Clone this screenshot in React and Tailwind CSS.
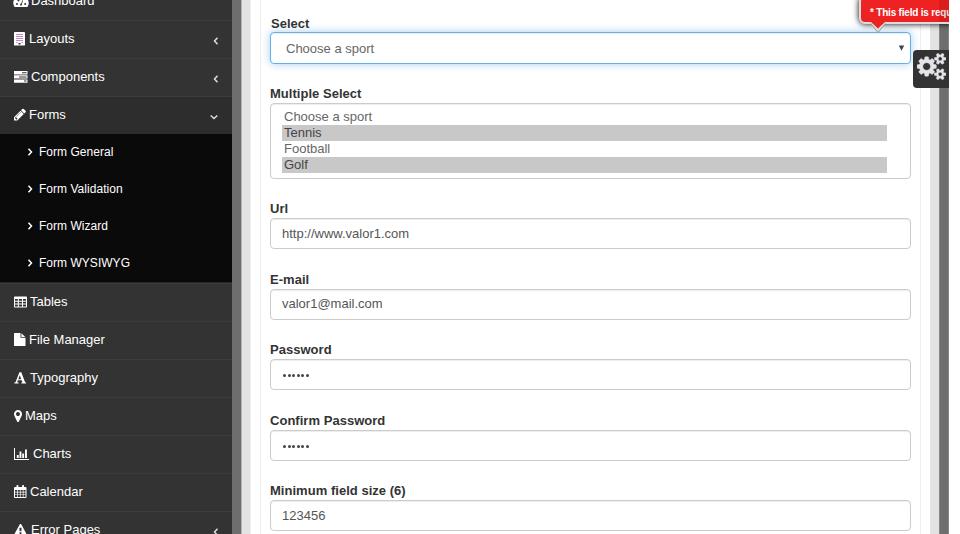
import React from "react";

const PENCIL =
  "M491 1536l91-91-235-235-91 91v107h128v128h107zm523-928q0-22-22-22-10 0-17 7l-542 542q-7 7-7 17 0 22 22 22 10 0 17-7l542-542q7-7 7-17zm-54-192l416 416-832 832h-416v-416zm683 96q0 53-37 90l-166 166-416-416 166-165q36-38 90-38 53 0 91 38l235 234q37 39 37 91z";
const MARKER =
  "M1152 640q0-106-75-181t-181-75-181 75-75 181 75 181 181 75 181-75 75-181zm256 0q0 109-33 179l-364 774q-16 33-47.5 52t-67.5 19-67.5-19-46.5-52l-365-774q-33-70-33-179 0-212 150-362t362-150 362 150 150 362z";
const WARNING =
  "M1024 1375v-190q0-14-9.5-23.5t-22.5-9.5h-192q-13 0-22.5 9.5t-9.5 23.5v190q0 14 9.5 23.5t22.5 9.5h192q13 0 22.5-9.5t9.5-23.5zm-2-374l18-459q0-12-10-19-13-11-24-11h-220q-11 0-24 11-10 7-10 21l17 457q0 10 10 16.5t24 6.5h185q14 0 23.5-6.5t10.5-16.5zm-14-934l768 1408q35 63-2 126-17 29-46.5 46t-63.5 17h-1536q-34 0-63.5-17t-46.5-46q-37-63-2-126l768-1408q17-31 47-49t65-18 65 18 47 49z";
const COGS =
  "M896 896q0-106-75-181t-181-75-181 75-75 181 75 181 181 75 181-75 75-181zm768 512q0-52-38-90t-90-38-90 38-38 90q0 53 37.5 90.5t90.5 37.5 90.5-37.5 37.5-90.5zm0-1024q0-52-38-90t-90-38-90 38-38 90q0 53 37.5 90.5t90.5 37.5 90.5-37.5 37.5-90.5zm-384 421v185q0 10-7 19.5t-16 10.5l-155 24q-11 35-32 76 34 48 90 115 7 11 7 20 0 12-7 19-23 30-82.5 89.5t-78.5 59.5q-11 0-21-7l-115-90q-37 19-77 31-11 108-23 155-7 24-30 24h-186q-11 0-20-7.5t-10-17.5l-23-153q-34-10-75-31l-118 89q-7 7-20 7-11 0-21-8-144-133-144-160 0-9 7-19 10-14 41-53t47-61q-23-44-35-82l-152-24q-10-1-17-9.5t-7-19.5v-185q0-10 7-19.5t16-10.5l155-24q11-35 32-76-34-48-90-115-7-11-7-20 0-12 7-20 22-30 82-89t79-59q11 0 21 7l115 90q34-18 77-32 11-108 23-154 7-24 30-24h186q11 0 20 7.5t10 17.5l23 153q34 10 75 31l118-89q8-7 20-7 11 0 21 8 144 133 144 160 0 8-7 19-12 16-42 54t-45 60q23 48 34 82l152 23q10 2 17 10.5t7 19.5zm640 533v140q0 16-149 31-12 27-30 52 51 113 51 138 0 4-4 7-122 71-124 71-8 0-46-47t-52-68q-20 2-30 2t-30-2q-14 21-52 68t-46 47q-2 0-124-71-4-3-4-7 0-25 51-138-18-25-30-52-149-15-149-31v-140q0-16 149-31 13-29 30-52-51-113-51-138 0-4 4-7 4-2 35-20t59-34 30-16q8 0 46 46.5t52 67.5q20-2 30-2t30 2q51-71 92-112l6-2q4 0 124 70 4 3 4 7 0 25-51 138 17 23 30 52 149 15 149 31zm0-1024v140q0 16-149 31-12 27-30 52 51 113 51 138 0 4-4 7-122 71-124 71-8 0-46-47t-52-68q-20 2-30 2t-30-2q-14 21-52 68t-46 47q-2 0-124-71-4-3-4-7 0-25 51-138-18-25-30-52-149-15-149-31v-140q0-16 149-31 13-29 30-52-51-113-51-138 0-4 4-7 4-2 35-20t59-34 30-16q8 0 46 46.5t52 67.5q20-2 30-2t30 2q51-71 92-112l6-2q4 0 124 70 4 3 4 7 0 25-51 138 17 23 30 52 149 15 149 31z";

// Sidebar icons are drawn in a 14px tall box; the width is the icon's advance.
function Icon({ w, box, children }) {
  return (
    <svg width={w} height="14" viewBox={box || `0 0 ${w} 14`} fill="currentColor" className="shrink-0 overflow-visible">
      {children}
    </svg>
  );
}

const icons = {
  dashboard: (
    <Icon w={14}>
      <path fillRule="evenodd" d="M.4 12.700A7 7 0 0 1 7 2a7 7 0 0 1 6.600 10.700l-.5.3H.9zM2 9.900a1 1 0 1 0 2 0a1 1 0 1 0-2 0zM3.500 6.400a1 1 0 1 0 2 0a1 1 0 1 0-2 0zM10.200 9.900a1 1 0 1 0 2 0a1 1 0 1 0-2 0zM6.300 11.500a1.200 1.200 0 0 0 1.600-1.600L9 6.500l-.7-.2-1.100 3.300a1.200 1.200 0 0 0-.9 1.900z" />
    </Icon>
  ),
  building: (
    <Icon w={11}>
      <rect width="11" height="13.500" rx=".4" />
      <g fill="#c48ac6">
        <path d="M2 2h7v1H2zM2 4h7v1H2zM2 6h7v1H2zM2 8h7v1H2zM2 10h1.500v1H2zM7.500 10H9v1H7.500z" />
      </g>
      <path fill="#333" d="M4.500 11h2v1.500h-2z" />
    </Icon>
  ),
  tasks: (
    <Icon w={13}>
      <path fillRule="evenodd" d="M0 1h13.500v3.400H0zM8 2.200v1h4.500v-1zM0 5.200h13.500v3.400H0zM5 6.400v1h7.500v-1zM0 9.400h13.500v3.400H0zM10 10.600v1h2.500v-1z" />
    </Icon>
  ),
  pencil: <Icon w={12} box="128 160 1536 1600"><path d={PENCIL} /></Icon>,
  table: (
    <Icon w={12}>
      <path fillRule="evenodd" d="M.8 1.500h11.400q.8 0 .8.800v9.400q0 .8-.8.800H.8q-.8 0-.8-.8V2.300q0-.8.800-.8zM1 4v1.800h2.800V4zM4.800 4v1.800h3.200V4zM9 4v1.800h3V4zM1 6.800v1.700h2.800V6.800zM4.800 6.800v1.700h3.200V6.800zM9 6.800v1.700h3V6.800zM1 9.500v2h2.800v-2zM4.800 9.500v2h3.200v-2zM9 9.500v2h3v-2z" />
    </Icon>
  ),
  file: (
    <Icon w={11}>
      <path d="M.5 0h6v4.800h5v7.700q0 .5-.5.500H.5q-.5 0-.5-.5V.5Q0 0 .5 0zM7.400.2L11.200 4H7.400z" />
    </Icon>
  ),
  font: (
    <Icon w={12}>
      <path fillRule="evenodd" d="M5.400 1.300h1.900l3.500 9.200.5.900.8.200v.9H7.300v-.9l1.200-.2-.8-2.200H3.900l-.7 2.100 1.400.3v.9H.3v-.9l1-.2.5-.9zM5.800 4.300L4.300 8.200h2.900z" />
    </Icon>
  ),
  marker: <Icon w={8} box="384 60 1024 1664"><path d={MARKER} /></Icon>,
  chart: (
    <Icon w={15}>
      <path d="M0 1h1v11h14v1H0zM2.800 8h1.900v3H2.800zM5.500 4.500h1.900V11H5.500zM8.200 6.500h1.900V11H8.200zM11 2.500h1.900V11H11z" />
    </Icon>
  ),
  calendar: (
    <Icon w={12}>
      <path fillRule="evenodd" d="M1 2h1.500V.8Q2.500 0 3.200 0h.5q.7 0 .7.800V2h3.700V.8q0-.8.700-.8h.5q.7 0 .7.800V2h1.500q1 0 1 1v9q0 1-1 1H1q-1 0-1-1V3q0-1 1-1zM1 4.900v1.800h2V4.900zM3.700 4.900v1.800h2.200V4.900zM6.600 4.900v1.800h2.200V4.900zM9.500 4.900v1.800h2V4.900zM1 7.400v2h2v-2zM3.700 7.400v2h2.200v-2zM6.600 7.400v2h2.200v-2zM9.500 7.400v2h2v-2zM1 10.100V12h2v-1.900zM3.700 10.100V12h2.200v-1.900zM6.600 10.100V12h2.200v-1.900zM9.500 10.100V12h2v-1.900z" />
    </Icon>
  ),
  warning: <Icon w={13} box="0 -60 1792 1792"><path d={WARNING} /></Icon>,
};

function Angle({ dir }) {
  const d = { left: "M6.500 1.700L3.500 5l3 3.300", down: "M1.700 3.500L5 6.500l3.300-3", right: "M3.500 1.700L6.500 5l-3 3.300" }[dir];
  return (
    <svg width="10" height="10" viewBox="0 0 10 10" fill="none" stroke="currentColor" strokeWidth="1.500" className="shrink-0">
      <path d={d} />
    </svg>
  );
}

function NavItem({ icon, label, arrow, active, gap }) {
  return (
    <li
      className={
        "flex h-[38px] shrink-0 items-center border-t border-[#3c3c3c] pb-[2px] pl-[14px] " +
        (arrow === "down" ? "pr-[13px] " : "pr-[11px] ") +
        (active ? "bg-[#2d2d2d]" : "")
      }
    >
      {icons[icon]}
      <span className={gap}>{label}</span>
      {arrow && (
        <span className="ml-auto pt-[5px] text-[#ddd]">
          <Angle dir={arrow} />
        </span>
      )}
    </li>
  );
}

function Sidebar() {
  return (
    <nav className="flex w-[232px] shrink-0 flex-col overflow-hidden bg-[#333] text-[13px] leading-[18px] text-white">
      <ul className="-mt-[18px]">
        <NavItem icon="dashboard" label="Dashboard" gap="ml-[3px]" />
        <NavItem icon="building" label="Layouts" arrow="left" gap="ml-[4px]" />
        <NavItem icon="tasks" label="Components" arrow="left" gap="ml-[4px]" />
        <NavItem icon="pencil" label="Forms" arrow="down" active gap="ml-[3px]" />
      </ul>
      <ul className="h-[148px] shrink-0 bg-[#0a0a0a] text-[12px]">
        {["Form General", "Form Validation", "Form Wizard", "Form WYSIWYG"].map((t) => (
          <li key={t} className="flex h-[37px] items-center pb-[2px] pl-[25px]">
            <Angle dir="right" />
            <span className="ml-[4px] tracking-[0.030px]">{t}</span>
          </li>
        ))}
      </ul>
      <ul className="border-t border-[#262626]">
        <NavItem icon="table" label="Tables" gap="ml-[4px]" />
        <NavItem icon="file" label="File Manager" gap="ml-[4px]" />
        <NavItem icon="font" label="Typography" gap="ml-[4px]" />
        <NavItem icon="marker" label="Maps" gap="ml-[3px]" />
        <NavItem icon="chart" label="Charts" gap="ml-[4px]" />
        <NavItem icon="calendar" label="Calendar" gap="ml-[4px]" />
        <NavItem icon="warning" label="Error Pages" arrow="left" gap="ml-[4px]" />
      </ul>
    </nav>
  );
}

function Label({ children }) {
  return <div className="h-[19px] pt-px text-[13px] font-bold leading-[18px] tracking-[0.030px] text-[#333]">{children}</div>;
}

function Field({ label, value, password }) {
  return (
    <div className="mb-[20.500px]">
      <Label>{label}</Label>
      <div className="flex h-[31px] items-center rounded-[4px] border border-[#ccc] bg-white px-[11px] text-[13px] text-[#555] shadow-[inset_0_1px_1px_rgba(0,0,0,0.075)]">
        {password ? (
          <span className="ml-px mt-[2px] flex gap-[1.600px]" aria-label="password">
            {[0, 1, 2, 3, 4, 5].map((i) => (
              <i key={i} className="h-[3px] w-[3px] rounded-full bg-[#444]" />
            ))}
          </span>
        ) : (
          <span>{value}</span>
        )}
      </div>
    </div>
  );
}

function Form() {
  return (
    <form className="flex-1 border-x border-[#eee] pl-[9px] pr-[9px] pt-[14px]">
      <div className="mb-[20px]">
        <div className="pl-px">
          <Label>Select</Label>
        </div>
        <div className="-mt-px flex h-[32px] items-center justify-between rounded-[4px] border border-[#66afe9] bg-white pl-[15px] pr-[5px] text-[13px] text-[#666] shadow-[inset_0_1px_1px_rgba(0,0,0,0.075),0_0_8px_rgba(102,175,233,0.600)]">
          <span className="pt-[2px]">Choose a sport</span>
          <svg width="7" height="6" viewBox="0 0 7 6" fill="#444">
            <path d="M.8.500h5.400L3.500 5.800z" />
          </svg>
        </div>
      </div>
      <div className="mb-[20px]">
        <Label>Multiple Select</Label>
        <ul className="h-[76px] rounded-[4px] border border-[#ccc] pl-[11px] pr-[23px] pt-[5px] text-[13px] leading-[15px] text-[#666] shadow-[inset_0_1px_1px_rgba(0,0,0,0.075)]">
          <li className="h-[16px] pl-[2px]">Choose a sport</li>
          <li className="h-[16px] bg-[#c8c8c8] pl-[2px] text-[#444]">Tennis</li>
          <li className="h-[15px] pl-[2px]">Football</li>
          <li className="mt-px h-[16px] bg-[#c8c8c8] pl-[2px] text-[#444]">Golf</li>
        </ul>
      </div>
      <Field label="Url" value="http://www.valor1.com" />
      <Field label="E-mail" value="valor1@mail.com" />
      <Field label="Password" password />
      <Field label="Confirm Password" password />
      <Field label="Minimum field size (6)" value="123456" />
    </form>
  );
}

export default function App() {
  return (
    <div className="relative flex h-[534px] w-[960px] overflow-hidden bg-white font-['Liberation_Sans',Arial,sans-serif]">
      <Sidebar />
      <div className="flex w-[717px] shrink-0 overflow-hidden">
        <div className="w-[9px] shrink-0 bg-[#6e6e6e]" />
        <div className="w-[10px] shrink-0 border-l border-r border-l-[#b4b4b4] border-r-[#eee] bg-[#e3e3e3]" />
        <main className="flex flex-1 px-[9px]">
          <Form />
        </main>
        <div className="w-[9px] shrink-0 bg-[#e3e3e3]" />
        <div className="w-[10px] shrink-0 border-x border-l-[#868686] border-r-[#868686] bg-[#6e6e6e]" />
      </div>

      {/* Validation bubble and settings tab float over the form, clipped at the page edge */}
      <div className="absolute left-[840px] top-0 h-[100px] w-[109px] overflow-hidden">
        <div className="absolute -top-[4px] left-[19px] h-[28px] w-[130px] rounded-[6px] border-2 border-[#ddd] bg-[#ee2222] pl-[9px] pt-[8px] text-[10px] font-bold leading-[13px] tracking-[-0.200px] text-white shadow-[0_0_6px_#000]">
          <span className="whitespace-nowrap">* This field is required</span>
        </div>
        <svg className="absolute left-[29px] top-[22px]" width="18" height="12" viewBox="0 0 18 12">
          <path d="M1.500 1.500L9 10.500l7.500-9" fill="#ddd" stroke="#999" strokeWidth="1" />
          <path d="M2 0h14L9 6.500z" fill="#ee2222" />
        </svg>
        <div className="absolute right-0 top-[50px] flex h-[38px] w-[36px] items-center rounded-l-[4px] bg-[#333] pl-[4px]">
          <svg width="29" height="27" viewBox="0 0 1920 1792" fill="#e3e3e8" stroke="#e3e3e8" strokeWidth="30" className="-mt-[5px]">
            <path d={COGS} />
          </svg>
        </div>
      </div>
      <div className="absolute left-[939px] top-0 h-[22px] w-[10px] bg-[#6e0000]/15" />
    </div>
  );
}
